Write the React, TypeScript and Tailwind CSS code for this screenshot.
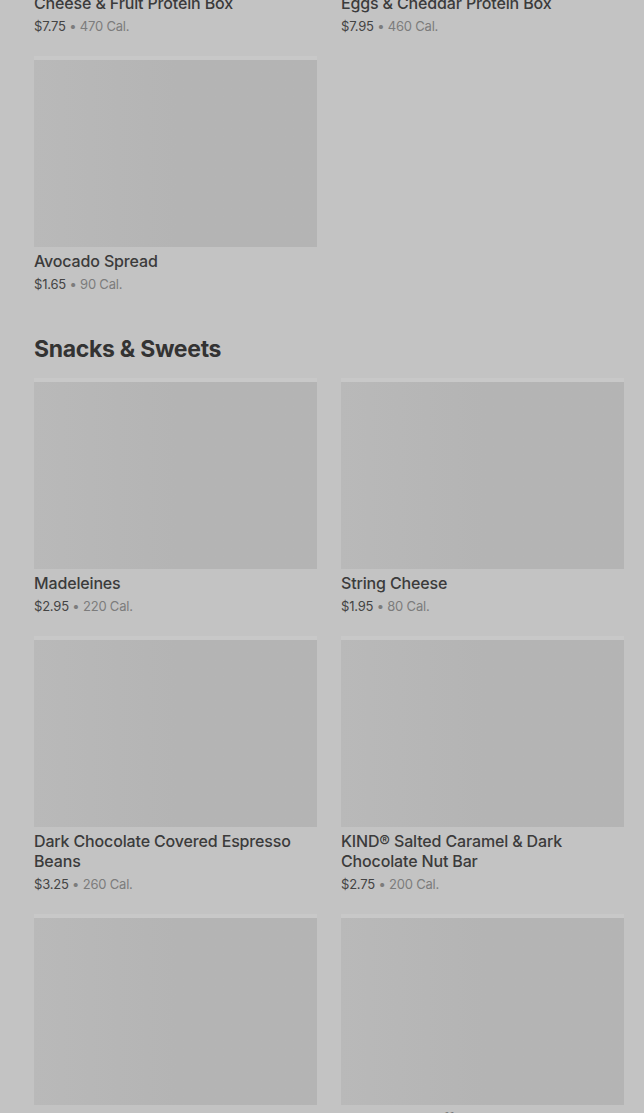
import React from "react";

type Item = { name: string; price: string; cal: string };

const PREV: Item[] = [
  { name: "Cheese & Fruit Protein Box", price: "$7.75", cal: "470 Cal." },
  { name: "Eggs & Cheddar Protein Box", price: "$7.95", cal: "460 Cal." },
  { name: "Avocado Spread", price: "$1.65", cal: "90 Cal." },
];

const SNACKS: Item[] = [
  { name: "Madeleines", price: "$2.95", cal: "220 Cal." },
  { name: "String Cheese", price: "$1.95", cal: "80 Cal." },
  { name: "Dark Chocolate Covered Espresso Beans", price: "$3.25", cal: "260 Cal." },
  { name: "KIND® Salted Caramel & Dark Chocolate Nut Bar", price: "$2.75", cal: "200 Cal." },
  { name: "Chocolate Chip Cookie", price: "$2.45", cal: "370 Cal." },
  { name: "Blueberry Muffin", price: "$3.15", cal: "410 Cal." },
];

function Card({ item }: { item: Item }) {
  return (
    <div className="flex flex-col">
      <div className="h-[191px] border-t-4 border-[#c8c8c8] bg-gradient-to-r from-[#b9b9b9] via-[#b4b4b4] to-[#b4b4b4]" />
      <p className="mt-[4px] text-[16px] font-medium leading-[20px] tracking-[-0.15px] text-[#3b3b3b]">
        {item.name}
      </p>
      <p className="mt-[3px] text-[13px] leading-[20px] tracking-[-0.2px]">
        <span className="text-[#444444]">{item.price}</span>
        <span className="text-[#7c7c7c]"> • {item.cal}</span>
      </p>
    </div>
  );
}

export default function App() {
  return (
    <div
      className="h-[1113px] overflow-hidden bg-[#c3c3c3]"
      style={{ fontFamily: "Inter, 'Noto Sans', sans-serif" }}
    >
      <div className="-mt-[202px] pl-[34px] pr-[20px]">
        <div className="grid grid-cols-2 gap-x-6 gap-y-5">
          {PREV.map((it) => (
            <Card key={it.name} item={it} />
          ))}
        </div>
        <h2 className="mt-[39px] mb-[13px] text-[23px] font-bold leading-[32px] tracking-[-0.3px] text-[#333333]">
          Snacks &amp; Sweets
        </h2>
        <div className="grid grid-cols-2 gap-x-6 gap-y-5">
          {SNACKS.map((it) => (
            <Card key={it.name} item={it} />
          ))}
        </div>
      </div>
    </div>
  );
}
